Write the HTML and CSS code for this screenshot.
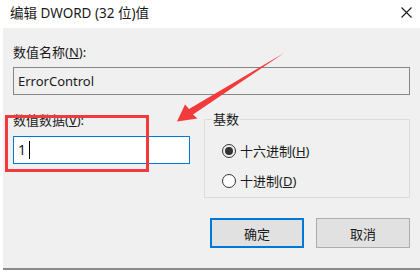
FILE: index.html
```html
<!DOCTYPE html>
<html lang="zh-CN">
<head>
<meta charset="utf-8">
<title>编辑 DWORD (32 位)值</title>
<link rel="stylesheet" href="styles.css">
</head>
<body>
<div class="window">
  <div class="titlebar">
    <span class="title">编辑 DWORD (32 位)值</span>
    <svg class="close" width="11" height="11" viewBox="0 0 11 11"><path d="M0.5 0.5L10.5 10.5M10.5 0.5L0.5 10.5" stroke="#1a1a1a" stroke-width="1.1"/></svg>
  </div>
  <div class="dialog">
    <div class="label">数值名称(<u>N</u>):</div>
    <div class="field readonly">ErrorControl</div>
    <div class="row">
      <div class="col-left">
        <div class="label">数值数据(<u>V</u>):</div>
        <div class="field edit">1<span class="caret"></span></div>
      </div>
      <fieldset class="group">
        <legend>基数</legend>
        <div class="radio"><span class="dot checked"></span>十六进制(<u>H</u>)</div>
        <div class="radio"><span class="dot"></span>十进制(<u>D</u>)</div>
      </fieldset>
    </div>
    <div class="buttons">
      <div class="btn default">确定</div>
      <div class="btn">取消</div>
    </div>
  </div>
  <div class="highlight"></div>
  <svg class="arrow" width="420" height="280" viewBox="0 0 420 280">
    <polygon points="284,53 193,114.5 197.5,118.5 177,121.5 185,104.5 189,109" fill="#f23a3c"/>
  </svg>
</div>
</body>
</html>
```

FILE: styles.css
```css
* { box-sizing: border-box; }
html, body { margin: 0; padding: 0; }
body {
  width: 420px;
  height: 280px;
  background: #ffffff;
  font-family: "Noto Sans", "Noto Sans CJK SC", sans-serif;
  font-size: 13px;
  color: #1a1a1a;
  overflow: hidden;
}
.window { position: relative; width: 420px; height: 280px; }
.titlebar {
  height: 28px;
  display: flex;
  align-items: center;
  justify-content: space-between;
  padding: 0 8px 0 10px;
  background: #ffffff;
}
.title { font-size: 13.5px; line-height: 16px; padding-bottom: 2px; }
.close { margin-bottom: 3px; }
.dialog {
  margin-left: 3px;
  height: 242px;
  background: #f0f0f0;
  border-bottom: 2px solid #8a8a8a;
  padding: 16px 10px 0 10px;
  display: flex;
  flex-direction: column;
}
.label { line-height: 16px; height: 16px; }
.field {
  height: 28px;
  line-height: 26px;
  padding: 0 4px;
  margin-top: 7px;
}
.readonly {
  background: #f0f0f0;
  border: 1px solid #858585;
}
.row {
  display: flex;
  gap: 14px;
  margin-top: 17px;
}
.col-left { width: 177px; }
.edit {
  background: #ffffff;
  border: 1px solid #0078d7;
  margin-top: 8px;
  display: flex;
  align-items: center;
  font-size: 14px;
}
.caret {
  display: inline-block;
  width: 1px;
  height: 18px;
  background: #000;
  margin-left: 3px;
}
.group {
  flex: 1;
  margin: 0;
  padding: 10px 0 0 0;
  height: 86px;
  border: 1px solid #dcdcdc;
}
.group legend {
  padding: 0 1px;
  margin-left: 7px;
  line-height: 14px;
}
.radio {
  display: flex;
  align-items: center;
  height: 30px;
  line-height: 16px;
  padding-left: 17px;
}
.dot {
  width: 14px;
  height: 14px;
  border-radius: 50%;
  border: 1px solid #333333;
  background: #ffffff;
  margin-right: 4px;
  display: flex;
  align-items: center;
  justify-content: center;
}
.dot.checked { background: #f0f0f0; }
.dot.checked::after {
  content: "";
  width: 8px;
  height: 8px;
  border-radius: 50%;
  background: #333333;
}
.buttons {
  display: flex;
  justify-content: flex-end;
  gap: 12px;
  margin-top: 20px;
}
.btn {
  width: 94px;
  height: 30px;
  background: #e1e1e1;
  border: 1px solid #adadad;
  display: flex;
  align-items: center;
  justify-content: center;
}
.btn.default { border: 2px solid #0078d7; }
.highlight {
  position: absolute;
  left: 5px;
  top: 115px;
  width: 144px;
  height: 57px;
  border: 3px solid #f23a3c;
}
.arrow { position: absolute; left: 0; top: 0; }
```
